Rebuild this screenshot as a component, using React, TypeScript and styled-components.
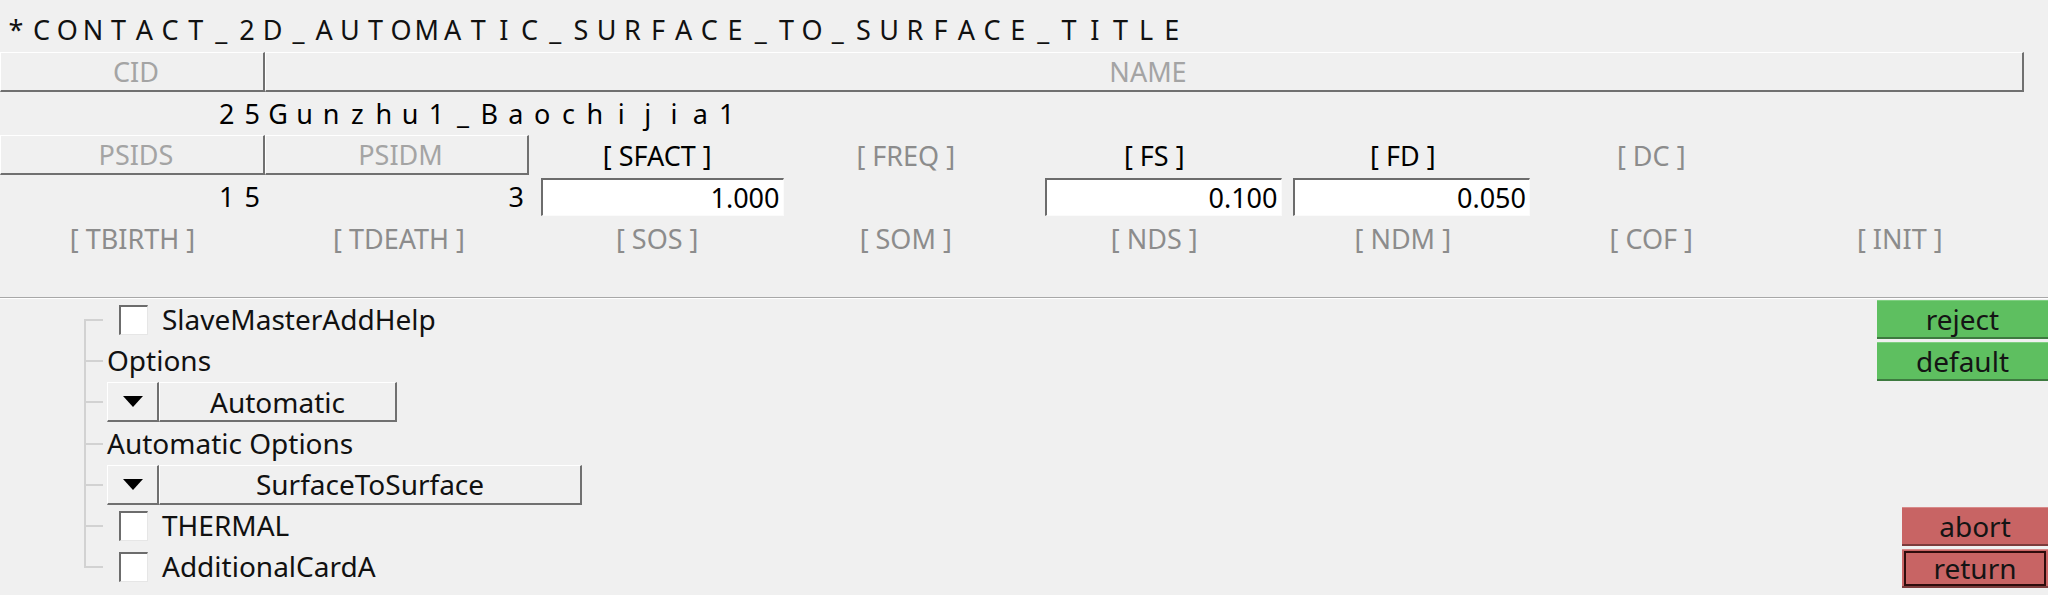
import React from 'react';
import styled, { createGlobalStyle } from 'styled-components';

const GlobalStyle = createGlobalStyle`
    html, body {
        margin: 0;
        padding: 0;
        background: #f0f0f0;
    }
    body {
        font-family: "Noto Sans", "Open Sans", sans-serif;
        color: #000;
        overflow: hidden;
    }
`;

const Page = styled.div`
    width: 2048px;
    height: 595px;
    display: flex;
    flex-direction: column;
    background: #f0f0f0;
`;

const TopPanel = styled.div`
    height: 297px;
    display: flex;
    flex-direction: column;
    font-size: 27px;
`;

const TitleBar = styled.div`
    height: 52px;
    display: flex;
    align-items: center;
    padding: 6px 0 0 3px;
    box-sizing: border-box;
    color: #111;
`;

const CharCell = styled.span<{ $cell: number }>`
    display: inline-block;
    width: ${p => p.$cell}px;
    text-align: center;
`;

const CardRow = styled.div<{ $height: number }>`
    display: grid;
    grid-template-columns: 265px 268px repeat(6, 248.5px);
    width: 2024px;
    height: ${p => p.$height}px;
`;

const HeaderButton = styled.div<{ $span?: number; $trim?: number }>`
    grid-column: span ${p => p.$span ?? 1};
    display: flex;
    align-items: center;
    justify-content: center;
    box-sizing: border-box;
    padding-left: 8px;
    margin-right: ${p => p.$trim ?? 0}px;
    background: #f0f0f0;
    border-top: 1px solid #ffffff;
    border-left: 1px solid #ffffff;
    border-right: 2px solid #707070;
    border-bottom: 2px solid #707070;
    color: #a4a4a4;
`;

const FieldLabel = styled.div<{ $active?: boolean }>`
    display: flex;
    align-items: center;
    justify-content: center;
    white-space: pre;
    color: ${p => (p.$active ? '#000' : '#8c8c8c')};
`;

const ValueText = styled.div<{ $align?: 'left' | 'right'; $trim?: number }>`
    display: flex;
    align-items: center;
    justify-content: ${p => (p.$align === 'left' ? 'flex-start' : 'flex-end')};
    padding-right: ${p => p.$trim ?? 0}px;
    white-space: nowrap;
`;

const NameValue = styled(ValueText)`
    grid-column: span 7;
`;

const InputBox = styled.div<{ $width: number; $shift: number }>`
    align-self: center;
    justify-self: end;
    width: ${p => p.$width}px;
    height: 38px;
    margin-right: -${p => p.$shift}px;
    box-sizing: border-box;
    display: flex;
    align-items: center;
    justify-content: flex-end;
    padding-right: 3px;
    background: #ffffff;
    border-top: 2px solid #6c6c6c;
    border-left: 2px solid #6c6c6c;
    border-right: 1px solid #fbfbfb;
    border-bottom: 1px solid #fbfbfb;
`;

const Separator = styled.div`
    height: 2px;
    border-top: 1px solid #a8a8a8;
    border-bottom: 1px solid #ffffff;
    box-sizing: border-box;
`;

const BottomPanel = styled.div`
    flex: 1;
    display: flex;
    font-size: 28px;
`;

const TreeArea = styled.div`
    flex: 1;
    padding-left: 84px;
`;

const TreeList = styled.div`
    position: relative;
    &::before {
        content: '';
        position: absolute;
        left: 0;
        top: 20px;
        bottom: 20px;
        width: 2px;
        background: #d2d2d2;
    }
`;

const TreeItem = styled.div`
    position: relative;
    height: 41.3px;
    display: flex;
    align-items: center;
    padding-left: 23px;
    &::before {
        content: '';
        position: absolute;
        left: 0;
        top: 50%;
        width: 19px;
        height: 2px;
        margin-top: -1px;
        background: #d2d2d2;
    }
`;

const CheckBox = styled.span`
    width: 29px;
    height: 30px;
    margin-left: 12px;
    margin-right: 14px;
    box-sizing: border-box;
    background: #ffffff;
    border-top: 2px solid #6c6c6c;
    border-left: 2px solid #6c6c6c;
    border-right: 1px solid #e6e6e6;
    border-bottom: 1px solid #e6e6e6;
`;

const ItemText = styled.span`
    color: #111;
    line-height: 1;
    margin-top: -2px;
`;

const Dropdown = styled.div`
    display: flex;
    height: 40px;
`;

const DropButton = styled.div<{ $width: number }>`
    width: ${p => p.$width}px;
    height: 100%;
    box-sizing: border-box;
    display: flex;
    align-items: center;
    justify-content: center;
    background: #f0f0f0;
    border-top: 1px solid #ffffff;
    border-left: 1px solid #ffffff;
    border-right: 2px solid #707070;
    border-bottom: 2px solid #707070;
    color: #111;
`;

const ButtonColumn = styled.div`
    width: 171px;
    display: flex;
    flex-direction: column;
    align-items: flex-end;
    justify-content: space-between;
    padding: 1px 0 7px;
`;

const ButtonGroup = styled.div`
    display: flex;
    flex-direction: column;
    align-items: flex-end;
    gap: 3px;
`;

const ActionButton = styled.button<{ $tone: 'green' | 'red'; $focused?: boolean }>`
    width: ${p => (p.$tone === 'green' ? 171 : 146)}px;
    height: 39px;
    margin: 0;
    padding: 0;
    box-sizing: border-box;
    font-family: "Noto Sans", "Open Sans", sans-serif;
    font-size: 28px;
    line-height: 1;
    color: #141414;
    background: ${p => (p.$tone === 'green' ? '#5ebf60' : '#c86464')};
    border: none;
    border-top: 1px solid ${p => (p.$tone === 'green' ? '#7fd081' : '#d88a8a')};
    border-bottom: 2px solid ${p => (p.$tone === 'green' ? '#3d7a3f' : '#7c3c3c')};
    outline: ${p => (p.$focused ? '2px solid #2e0c0c' : 'none')};
    outline-offset: -4px;
`;

const Arrow = () => (
    <svg width="20" height="11" viewBox="0 0 20 11">
        <polygon points="0,0 20,0 10,11" fill="#000" />
    </svg>
);

const Spaced: React.FC<{ text: string; cell?: number }> = ({ text, cell = 25.5 }) => (
    <>
        {text.split('').map((ch, i) => (
            <CharCell key={i} $cell={cell}>{ch}</CharCell>
        ))}
    </>
);

const App: React.FC = () => {
    return (
        <Page>
            <GlobalStyle />
            <TopPanel>
                <TitleBar>
                    <Spaced text="*CONTACT_2D_AUTOMATIC_SURFACE_TO_SURFACE_TITLE" cell={25.7} />
                </TitleBar>
                <CardRow $height={40}>
                    <HeaderButton>CID</HeaderButton>
                    <HeaderButton $span={7}>NAME</HeaderButton>
                </CardRow>
                <CardRow $height={43}>
                    <ValueText><Spaced text="25" /></ValueText>
                    <NameValue $align="left"><Spaced text="Gunzhu1_Baochijia1" cell={26.4} /></NameValue>
                </CardRow>
                <CardRow $height={40}>
                    <HeaderButton>PSIDS</HeaderButton>
                    <HeaderButton $trim={4}>PSIDM</HeaderButton>
                    <FieldLabel $active>[ SFACT ]</FieldLabel>
                    <FieldLabel>[ FREQ ]</FieldLabel>
                    <FieldLabel $active>[ FS ]</FieldLabel>
                    <FieldLabel $active>[ FD ]</FieldLabel>
                    <FieldLabel>[ DC ]</FieldLabel>
                </CardRow>
                <CardRow $height={43}>
                    <ValueText><Spaced text="15" /></ValueText>
                    <ValueText $trim={4}><Spaced text="3" /></ValueText>
                    <InputBox $width={243} $shift={2}>1.000</InputBox>
                    <div />
                    <InputBox $width={237} $shift={3}>0.100</InputBox>
                    <InputBox $width={237} $shift={3}>0.050</InputBox>
                </CardRow>
                <CardRow $height={40}>
                    <FieldLabel>[ TBIRTH ]</FieldLabel>
                    <FieldLabel>[ TDEATH ]</FieldLabel>
                    <FieldLabel>[ SOS ]</FieldLabel>
                    <FieldLabel>[ SOM ]</FieldLabel>
                    <FieldLabel>[ NDS ]</FieldLabel>
                    <FieldLabel>[ NDM ]</FieldLabel>
                    <FieldLabel>[ COF ]</FieldLabel>
                    <FieldLabel>[ INIT ]</FieldLabel>
                </CardRow>
            </TopPanel>
            <Separator />
            <BottomPanel>
                <TreeArea>
                    <TreeList>
                        <TreeItem>
                            <CheckBox />
                            <ItemText>SlaveMasterAddHelp</ItemText>
                        </TreeItem>
                        <TreeItem>
                            <ItemText>Options</ItemText>
                        </TreeItem>
                        <TreeItem>
                            <Dropdown>
                                <DropButton $width={52}><Arrow /></DropButton>
                                <DropButton $width={238}>Automatic</DropButton>
                            </Dropdown>
                        </TreeItem>
                        <TreeItem>
                            <ItemText>Automatic Options</ItemText>
                        </TreeItem>
                        <TreeItem>
                            <Dropdown>
                                <DropButton $width={52}><Arrow /></DropButton>
                                <DropButton $width={423}>SurfaceToSurface</DropButton>
                            </Dropdown>
                        </TreeItem>
                        <TreeItem>
                            <CheckBox />
                            <ItemText>THERMAL</ItemText>
                        </TreeItem>
                        <TreeItem>
                            <CheckBox />
                            <ItemText>AdditionalCardA</ItemText>
                        </TreeItem>
                    </TreeList>
                </TreeArea>
                <ButtonColumn>
                    <ButtonGroup>
                        <ActionButton $tone="green">reject</ActionButton>
                        <ActionButton $tone="green">default</ActionButton>
                    </ButtonGroup>
                    <ButtonGroup>
                        <ActionButton $tone="red">abort</ActionButton>
                        <ActionButton $tone="red" $focused>return</ActionButton>
                    </ButtonGroup>
                </ButtonColumn>
            </BottomPanel>
        </Page>
    );
};

export default App;
